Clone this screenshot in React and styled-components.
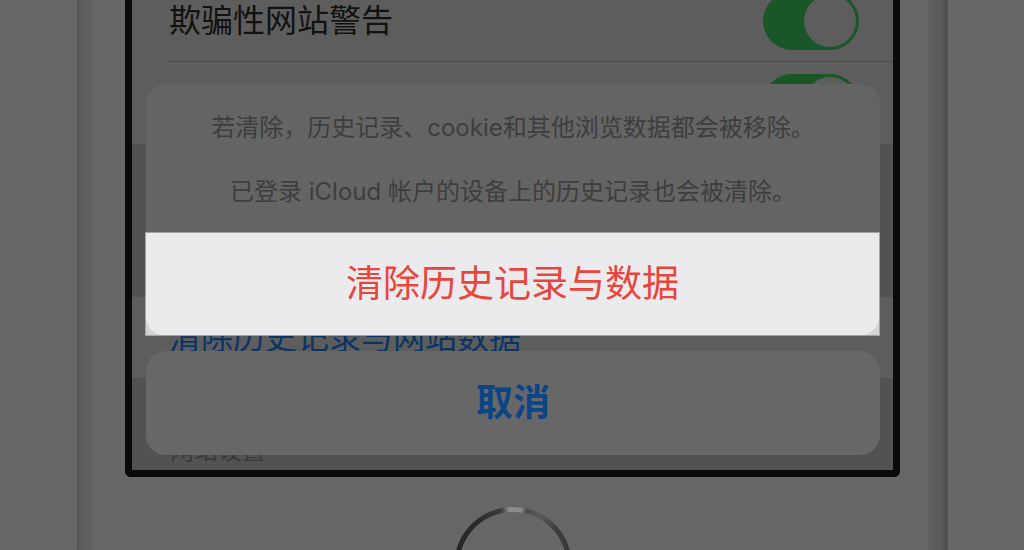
import React from "react";
import styled, { createGlobalStyle } from "styled-components";

const GlobalStyle = createGlobalStyle`
  html, body {
    margin: 0;
    padding: 0;
    background: #666;
  }
  body {
    font-family: Inter, "Noto Sans CJK SC", sans-serif;
  }
`;

const Stage = styled.div`
  width: 1024px;
  height: 550px;
  overflow: hidden;
  background: #666;
  display: flex;
  padding-left: 77px;
  box-sizing: border-box;
`;

const PhoneBody = styled.div`
  flex: none;
  width: 871px;
  margin-top: -20px;
  padding: 0 48px;
  box-sizing: border-box;
  display: flex;
  flex-direction: column;
  align-items: center;
  background: linear-gradient(
    to right,
    #525252 0,
    #5a5a5a 3px,
    #606060 12px,
    #666 18px,
    #666 calc(100% - 20px),
    #5f5f5f calc(100% - 19px),
    #5a5a5a calc(100% - 6px),
    #4e4e4e calc(100% - 3px),
    #545454 100%
  );
`;

const ScreenFrame = styled.div`
  width: 100%;
  box-sizing: border-box;
  border: 7px solid #0a0a0a;
  border-top: none;
  border-radius: 0 0 6px 6px;
`;

const Screen = styled.div`
  position: relative;
  height: 490px;
  overflow: hidden;
  background: #525252;
  display: flex;
  flex-direction: column;
`;

const Group = styled.div`
  background: #5d5d5d;
  display: flex;
  flex-direction: column;
`;

const Row = styled.div`
  height: ${(p) => p.$h}px;
  padding: 0 34px 0 37px;
  display: flex;
  align-items: center;
  justify-content: ${(p) => (p.$end ? "flex-end" : "space-between")};
  font-size: 32px;
  line-height: 40px;
  color: ${(p) => (p.$link ? "#0a3464" : "#121212")};
`;

const Divider = styled.div`
  height: 1px;
  margin-left: 36px;
  background: #4c4c4c;
`;

const Gap = styled.div`
  height: ${(p) => p.$h}px;
`;

const SectionHeader = styled.div`
  height: 92px;
  padding: 0 0 4px 38px;
  box-sizing: border-box;
  display: flex;
  align-items: flex-end;
  font-size: 24px;
  line-height: 30px;
  color: #3a3a3a;
`;

const Track = styled.div`
  flex: none;
  width: 96px;
  height: 58px;
  border-radius: 29px;
  background: #1a5726;
  display: flex;
  align-items: center;
  justify-content: flex-end;
  padding: 0 3px;
  box-sizing: border-box;
`;

const Knob = styled.div`
  width: 52px;
  height: 52px;
  border-radius: 50%;
  background: #5d5d5d;
`;

const Toggle = () => (
  <Track>
    <Knob />
  </Track>
);

/* action sheet laid over the dimmed settings list */
const Sheet = styled.div`
  position: absolute;
  left: 14px;
  right: 13px;
  bottom: 15px;
  display: flex;
  flex-direction: column;
  gap: 15px;
`;

const SheetGroup = styled.div`
  display: flex;
  flex-direction: column;
`;

const Message = styled.div`
  background: #646464;
  border-radius: 20px 20px 0 0;
  padding: 29px 20px 25px;
  display: flex;
  flex-direction: column;
  gap: 34px;
  text-align: center;
  font-size: 24px;
  line-height: 30px;
  color: #3e3e3e;
`;

const HighlightFrame = styled.div`
  height: 104px;
  margin-left: -1px;
  box-sizing: border-box;
  border: 1px solid #a4a4a4;
  background: #d3d3d3;
`;

const ActionFace = styled.div`
  height: 100%;
  border-radius: 0 0 18px 18px;
  background: #ebebee;
  display: flex;
  align-items: center;
  justify-content: center;
  font-size: 37px;
  line-height: 44px;
  color: #e8463c;
`;

const CancelButton = styled.div`
  height: 104px;
  border-radius: 20px;
  background: #676767;
  display: flex;
  align-items: center;
  justify-content: center;
  font-size: 37px;
  line-height: 44px;
  font-weight: 600;
  color: #0b4585;
`;

const HomeButton = styled.div`
  flex: none;
  margin-top: 30px;
  width: 118px;
  height: 118px;
  border-radius: 50%;
  box-sizing: border-box;
  border: 5px solid transparent;
  background: linear-gradient(#666, #666) padding-box,
    conic-gradient(
        from -12deg,
        #3a3a3a 0deg,
        #8c8c8c 8deg,
        #8c8c8c 20deg,
        #4a4a4a 26deg,
        #5a5a5a 40deg,
        #3c3c3c 62deg,
        #2e2e2e 160deg,
        #232323 280deg,
        #2a2a2a 330deg,
        #3a3a3a 360deg
      )
      border-box;
`;

export default function App() {
  return (
    <>
      <GlobalStyle />
      <Stage>
        <PhoneBody>
          <ScreenFrame>
            <Screen>
              <Group>
                <Row $h={81}>
                  <span>欺骗性网站警告</span>
                  <Toggle />
                </Row>
                <Divider />
                <Row $h={82} $end>
                  <Toggle />
                </Row>
              </Group>
              <Gap $h={153} />
              <Group>
                <Row $h={81} $link>
                  <span>清除历史记录与网站数据</span>
                </Row>
              </Group>
              <SectionHeader>网站设置</SectionHeader>

              <Sheet>
                <SheetGroup>
                  <Message>
                    <div>若清除，历史记录、cookie和其他浏览数据都会被移除。</div>
                    <div>已登录 iCloud 帐户的设备上的历史记录也会被清除。</div>
                  </Message>
                  <HighlightFrame>
                    <ActionFace>清除历史记录与数据</ActionFace>
                  </HighlightFrame>
                </SheetGroup>
                <CancelButton>取消</CancelButton>
              </Sheet>
            </Screen>
          </ScreenFrame>
          <HomeButton />
        </PhoneBody>
      </Stage>
    </>
  );
}
